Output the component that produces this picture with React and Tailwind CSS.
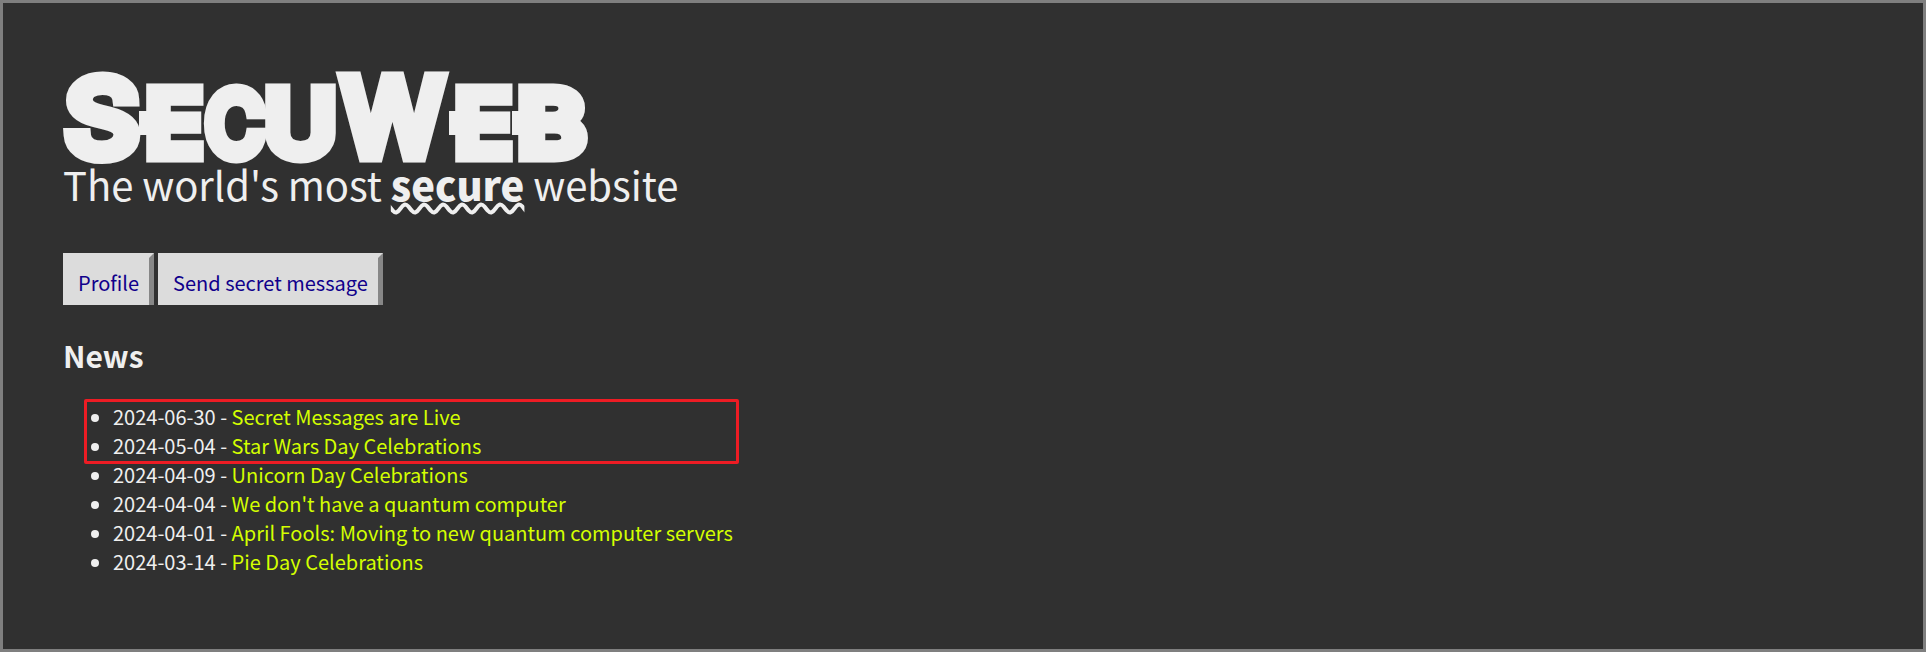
const news = [
  ['2024-06-30', 'Secret Messages are Live'],
  ['2024-05-04', 'Star Wars Day Celebrations'],
  ['2024-04-09', 'Unicorn Day Celebrations'],
  ['2024-04-04', "We don't have a quantum computer"],
  ['2024-04-01', 'April Fools: Moving to new quantum computer servers'],
  ['2024-03-14', 'Pie Day Celebrations'],
];

// Letter, left edge, advance width, font size
const letters = [
  ['S', 2.5, 73, 103],
  ['E', 83, 56, 88],
  ['C', 143, 58, 87],
  ['U', 202, 71, 88],
  ['W', 279.5, 100, 104],
  ['E', 392, 56, 88],
  ['B', 455, 67, 88],
];

function Logo() {
  return (
    <svg width="530" height="92" viewBox="0 0 530 92" className="block overflow-visible" fill="#efefef" stroke="#efefef">
      {letters.map(([c, x, w, size], i) => (
        <text key={i} x={x} y="83.5" textLength={w} lengthAdjust="spacingAndGlyphs" fontSize={size} strokeWidth="15" className="font-['Inter',sans-serif] font-normal">
          {c}
        </text>
      ))}
      <g stroke="none">
        <rect x="76" y="40" width="10" height="24" />
        <rect x="386" y="40" width="10" height="24" />
        <rect x="449" y="40" width="12" height="24" />
      </g>
    </svg>
  );
}

function NavLink({ children }) {
  return (
    <a href="#" className="h-[52px] border-r-[5px] border-t-[5px] border-r-[#878787] border-t-[#dcdcdc] bg-[#dcdcdc] pl-[15px] pr-[10px] pt-[10px] text-[20px] leading-[29px] text-[#10008b]">
      {children}
    </a>
  );
}

export default function App() {
  return (
    <main className="h-[652px] w-full border-[3px] border-[#7f7f7f] bg-[#303030] pl-[60px] pt-[68px] font-['Noto_Sans_CJK_JP',sans-serif] text-[#efefef]">
      <h1><Logo /></h1>
      <p className="h-[90px] whitespace-nowrap text-[40px] leading-[42px] tracking-[-0.03px]">
        The world's most <strong className="font-black underline decoration-wavy">secure</strong> website
      </p>
      <nav className="flex gap-1">
        <NavLink>Profile</NavLink>
        <NavLink>Send secret message</NavLink>
      </nav>
      <h2 className="mt-[28px] text-[30px] font-bold leading-[44px]">News</h2>
      <div className="relative mt-[25px]">
        <ul className="list-disc pl-[50px] text-[20px] leading-[29px]">
          {news.map(([date, title]) => (
            <li key={date}>
              {date} - <a href="#" className="text-[#d4ff00]">{title}</a>
            </li>
          ))}
        </ul>
        <div className="absolute left-[21px] top-[-3px] h-[65px] w-[655px] rounded-[2px] border-[3px] border-[#ed1c24]" />
      </div>
    </main>
  );
}
